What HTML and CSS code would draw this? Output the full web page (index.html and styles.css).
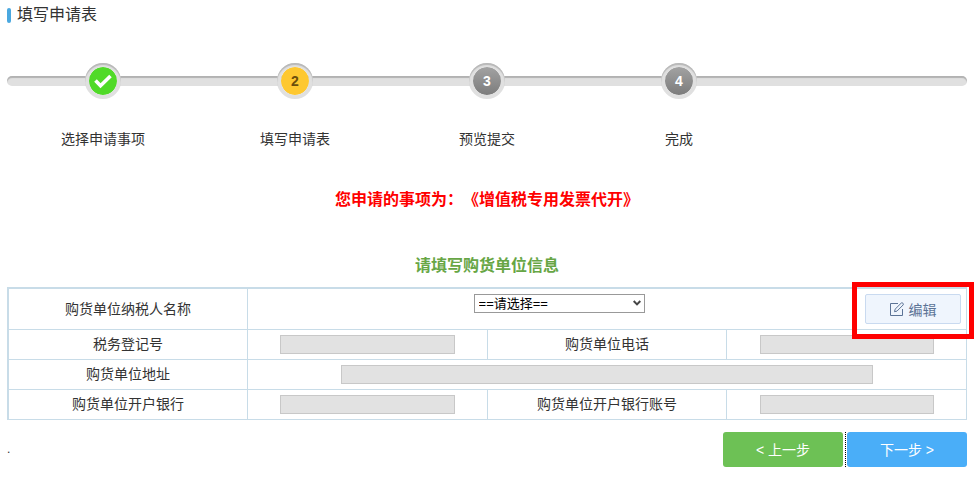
FILE: index.html
```html
<!DOCTYPE html>
<html lang="zh-CN">
  <head>
    <meta charset="UTF-8" />
    <meta name="viewport" content="width=device-width, initial-scale=1.0" />
    <title>填写申请表</title>
    <link rel="stylesheet" href="styles.css">
  </head>
  <body>
    <div class="container">
      <h1 class="page-title">填写申请表</h1>

      <!-- 步骤 -->
      <ol class="steps">
        <li class="step done">
          <span class="step-dot">
            <svg width="20" height="20" viewBox="0 0 20 20" fill="none" stroke="#fff" stroke-width="3.6">
              <path d="M2.5 9.5l5 5.2L17.5 5" />
            </svg>
          </span>
          <span class="step-name">选择申请事项</span>
        </li>
        <li class="step current">
          <span class="step-dot">2</span>
          <span class="step-name">填写申请表</span>
        </li>
        <li class="step">
          <span class="step-dot">3</span>
          <span class="step-name">预览提交</span>
        </li>
        <li class="step">
          <span class="step-dot">4</span>
          <span class="step-name">完成</span>
        </li>
      </ol>

      <p class="matter">您申请的事项为：《增值税专用发票代开》</p>

      <form>
        <h2 class="form-title">请填写购货单位信息</h2>
        <table class="form-table">
          <tr class="row-name">
            <th><label for="buyer-name">购货单位纳税人名称</label></th>
            <td colspan="3">
              <div class="name-cell">
                <div class="select-box">
                  <select id="buyer-name">
                    <option>==请选择==</option>
                  </select>
                  <svg class="arrow" width="8" height="6" viewBox="0 0 8 6" fill="none" stroke="#444" stroke-width="2">
                    <path d="M.7 1L4 4.4 7.3 1" />
                  </svg>
                </div>
                <div class="edit-box">
                  <button type="button" class="btn-edit">
                    <svg width="14" height="14" viewBox="0 0 14 14" fill="none" stroke="#5b7396">
                      <path d="M8 1.5H.5v12h12V7" />
                      <path d="M4.5 9.7l.6-2.5L11.3 1c.9-.8 2.8.8 1.9 1.9L7 9.1z" />
                    </svg>
                    编辑
                  </button>
                </div>
              </div>
            </td>
          </tr>
          <tr>
            <th><label for="tax-no">税务登记号</label></th>
            <td><input type="text" id="tax-no" disabled /></td>
            <th><label for="phone">购货单位电话</label></th>
            <td><input type="text" id="phone" disabled /></td>
          </tr>
          <tr>
            <th><label for="address">购货单位地址</label></th>
            <td colspan="3"><input type="text" id="address" disabled /></td>
          </tr>
          <tr>
            <th><label for="bank">购货单位开户银行</label></th>
            <td><input type="text" id="bank" disabled /></td>
            <th><label for="account">购货单位开户银行账号</label></th>
            <td><input type="text" id="account" disabled /></td>
          </tr>
        </table>

        <div class="actions">
          <span class="dot">.</span>
          <button type="button" class="btn btn-prev">&lt; 上一步</button>
          <span class="divider"></span>
          <button type="button" class="btn btn-next">下一步 &gt;</button>
        </div>
      </form>
    </div>
  </body>
</html>
```
FILE: styles.css
```css
:root {
  --line: #c8dce8;
  --font: "Liberation Sans", "Noto Sans CJK SC", sans-serif;
}

* {
  box-sizing: border-box;
}

body {
  margin: 0;
  font-family: var(--font);
  font-size: 14px;
  line-height: 20px;
  color: #333;
  background: #fff;
}

button,
input,
select {
  font-family: inherit;
  font-size: 14px;
}

.container {
  padding: 5px 9px 0 7px;
}

.page-title {
  display: flex;
  align-items: center;
  gap: 6px;
  margin: 0;
  font-size: 16px;
  font-weight: normal;
  line-height: 20px;
}

.page-title::before {
  content: '';
  width: 4px;
  height: 15px;
  border-radius: 2px;
  background: #4aa8e0;
}

/* 步骤条 */
.steps {
  display: flex;
  position: relative;
  margin: 38px 0 0;
  padding: 0;
  list-style: none;
}

.steps::before {
  content: '';
  position: absolute;
  top: 13px;
  left: 0;
  right: 0;
  height: 10px;
  border-radius: 5px;
  background: #e0e0e0;
  box-shadow: inset 0 2px 1px #b2b2b2;
}

.step {
  display: flex;
  flex-direction: column;
  align-items: center;
  gap: 30px;
  width: 20%;
}

.step-dot {
  display: flex;
  align-items: center;
  justify-content: center;
  position: relative;
  width: 36px;
  height: 36px;
  border: 4px solid #e0e0e0;
  border-radius: 50%;
  background: linear-gradient(#a2a2a2, #7c7c7c);
  background-clip: padding-box;
  font-size: 14px;
  font-weight: bold;
  color: #fff;
}

.step-dot::before {
  content: '';
  position: absolute;
  inset: -4px;
  border-radius: 50%;
  box-shadow: inset 0 2px 1px #b8b8b8;
}

.step.done .step-dot {
  background-color: #50da28;
  background-image: none;
}

.step.current .step-dot {
  background-color: #fec830;
  background-image: none;
  color: #6b4e0c;
}

.matter {
  margin: 41px 0 0;
  font-size: 16px;
  font-weight: bold;
  text-align: center;
  text-spacing-trim: space-all;
  color: #f00;
}

.form-title {
  margin: 46px 0 11px;
  font-size: 16px;
  font-weight: bold;
  text-align: center;
  color: #67a645;
}

/* 表格 */
.form-table {
  width: 100%;
  table-layout: fixed;
  border-collapse: collapse;
  border: 1px solid var(--line);
  border-top-width: 2px;
  border-left-width: 2px;
}

.form-table th,
.form-table td {
  height: 30px;
  padding: 0;
  border: 1px solid var(--line);
  font-weight: normal;
  text-align: center;
  vertical-align: middle;
}

.form-table tr:first-child > * {
  border-top-width: 2px;
}

.form-table .row-name > * {
  height: 41px;
}

.form-table input {
  display: block;
  width: 74%;
  max-width: 100%;
  height: 19px;
  margin: 0 auto;
  border: 1px solid #c8c8c8;
  background: #e2e2e2;
}

.form-table td:not([colspan]) input {
  width: 73%;
}

.name-cell {
  display: flex;
  align-items: flex-start;
  padding: 0 5px;
}

.select-box {
  display: flex;
  align-items: center;
  justify-content: center;
  flex: 1;
}

.select-box select {
  appearance: none;
  width: 171px;
  height: 19px;
  padding: 0 4px;
  border: 1px solid #999;
  border-radius: 0;
  background: #fff;
  font-size: 13px;
  line-height: 17px;
  color: #000;
}

.arrow {
  margin-left: -12px;
  margin-right: 4px;
  pointer-events: none;
}

.edit-box {
  position: relative;
}

.edit-box::after {
  content: '';
  position: absolute;
  inset: -12px -13px -15px;
  border: 5px solid #f00;
  pointer-events: none;
}

.btn-edit {
  display: flex;
  align-items: center;
  justify-content: center;
  gap: 5px;
  width: 96px;
  height: 30px;
  padding: 0;
  border: 1px solid #c9daf0;
  border-radius: 2px;
  background: #eff5fd;
  color: #5b7396;
}

/* 底部按钮 */
.actions {
  display: flex;
  align-items: center;
  margin-top: 12px;
}

.dot {
  flex: 1;
  font-size: 12px;
}

.btn {
  width: 120px;
  height: 35px;
  padding: 0;
  border: 0;
  border-radius: 3px;
  color: #fff;
}

.btn-prev {
  background: #6dc155;
}

.btn-next {
  background: #4aaef8;
}

.divider {
  height: 35px;
  margin: 0 1px 0 2px;
  border-left: 1px dotted #000;
}
```
